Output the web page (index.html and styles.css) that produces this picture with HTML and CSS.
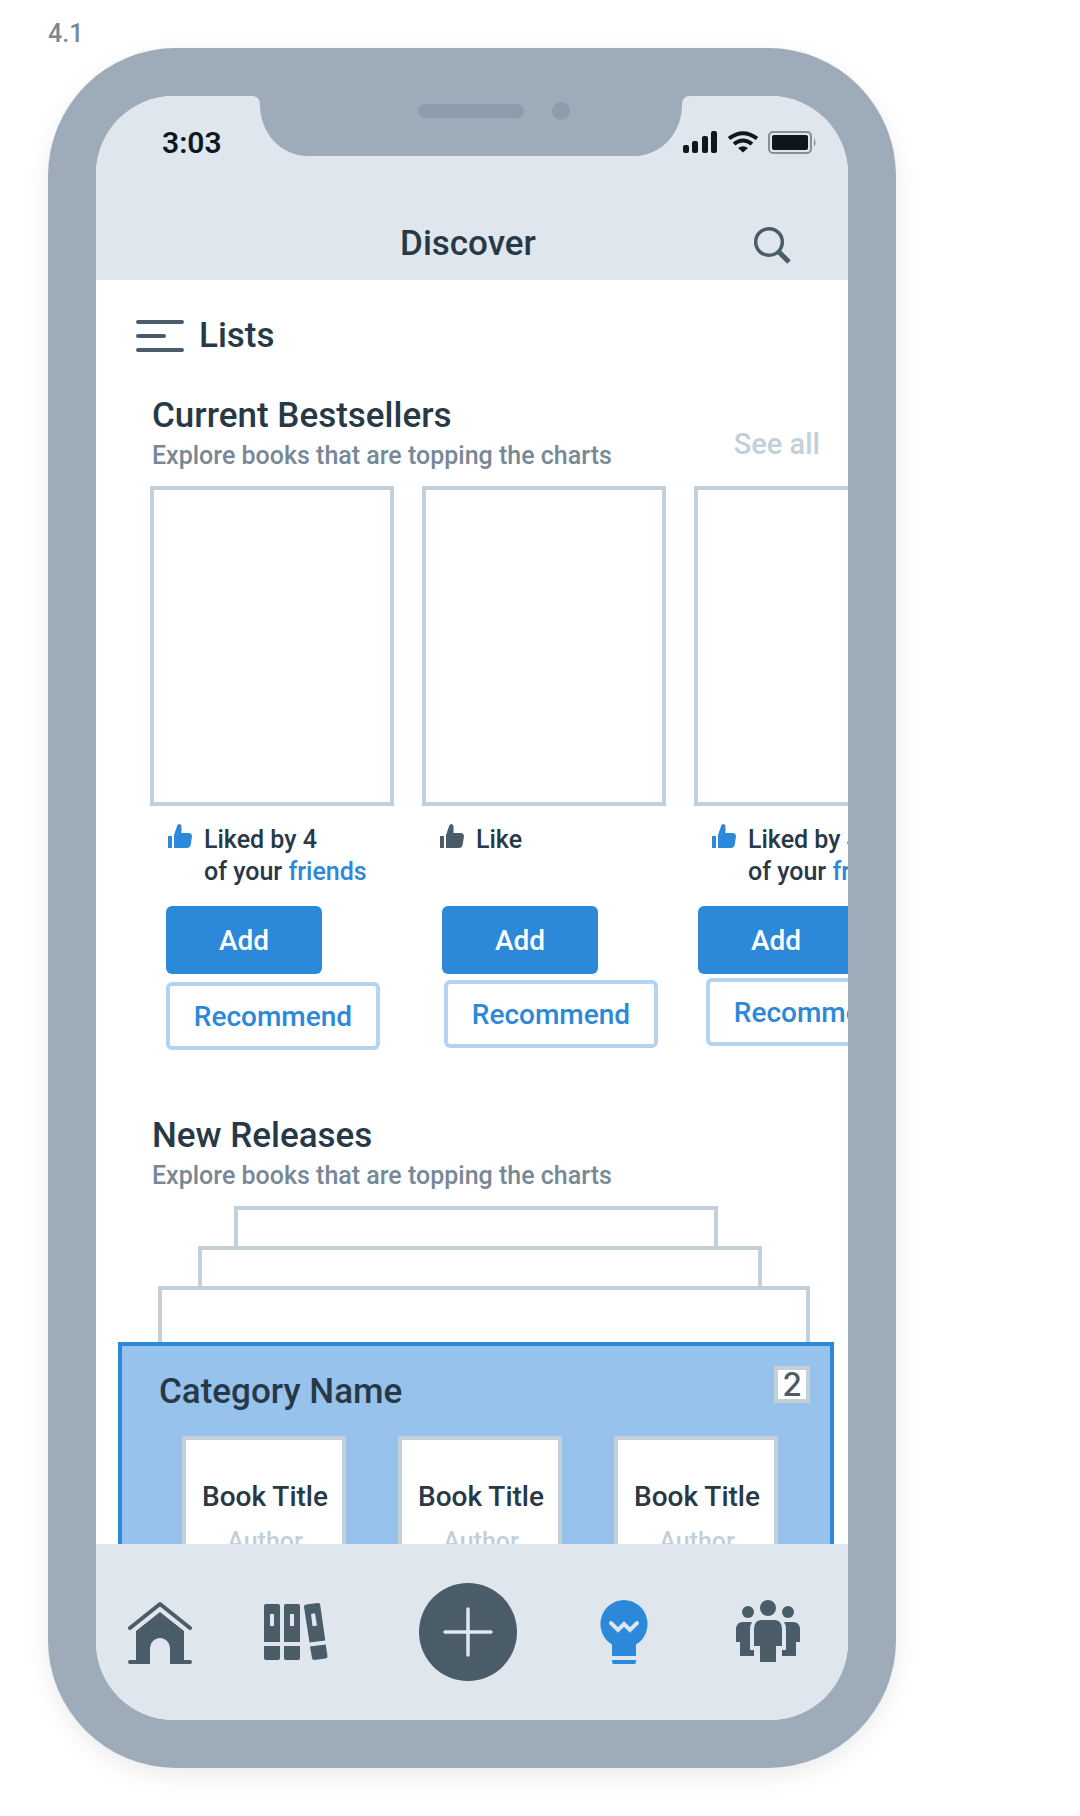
FILE: index.html
```html
<!DOCTYPE html>
<html lang="en">
<head>
  <meta charset="utf-8">
  <meta name="viewport" content="width=device-width, initial-scale=1">
  <title>Discover</title>
  <link rel="stylesheet" href="styles.css">
</head>
<body>
  <svg class="symbols" aria-hidden="true">
    <symbol id="thumb" viewBox="0 0 24 24">
      <path d="M0 12h4v12H0zM6 11 9.300 1.500Q9.800 0 11.300 0 13.500 0 13.500 2.500V9H20.500Q24 9 24 12.500L22.700 20.500Q22.200 24 18.500 24H6z"/>
    </symbol>
  </svg>

  <p class="frame-label">4.1</p>

  <div class="phone">
    <div class="screen">
      <svg class="notch" viewBox="0 0 438 60" aria-hidden="true">
        <path class="notch-body" d="M0 0Q8 0 8 9C8 36 28 60 56 60H382C410 60 430 36 430 9Q430 0 438 0z"/>
        <rect class="notch-part" x="166" y="8" width="106" height="14" rx="7"/>
        <circle class="notch-part" cx="309" cy="15" r="9"/>
      </svg>

      <header class="top">
        <div class="status">
          <span class="clock">3:03</span>
          <svg class="status-icons" viewBox="0 0 136 24" role="img" aria-label="Signal, wifi and battery">
            <rect x="0" y="14" width="6" height="8" rx="2"/>
            <rect x="9" y="10" width="6" height="12" rx="2"/>
            <rect x="19" y="5" width="6" height="17" rx="2"/>
            <rect x="28" y="0" width="6" height="22" rx="2"/>
            <g fill="none" stroke="#0f171e" stroke-width="4">
              <path d="M46 7.500Q60-3 74 7.500M51 13Q60 6 69 13"/>
            </g>
            <path d="M55 17Q60 13.500 65 17L60 21.500z"/>
            <rect x="86" y="1" width="42" height="21" rx="4" fill="none" stroke="#8b8d91" stroke-width="2"/>
            <rect x="89" y="4" width="36" height="15" rx="2"/>
            <path d="M131 7q3 4.500 0 9z" fill="#8b8d91"/>
          </svg>
        </div>
        <div class="title-row">
          <h1 class="title">Discover</h1>
          <button class="search" type="button" aria-label="Search">
            <svg viewBox="0 0 40 40" aria-hidden="true">
              <circle cx="17" cy="18" r="13.300" stroke-width="3.500"/>
              <path d="M27 28 37 38" stroke-width="5"/>
            </svg>
          </button>
        </div>
      </header>

      <main class="feed">
        <button class="lists" type="button">
          <svg class="lists-icon" viewBox="0 0 48 32" aria-hidden="true">
            <path d="M2 2H46M2 16H28M2 30H46"/>
          </svg>
          Lists
        </button>

        <section class="section">
          <div class="section-head">
            <div>
              <h2 class="heading">Current Bestsellers</h2>
              <p class="sub">Explore books that are topping the charts</p>
            </div>
            <a class="see-all" href="#all">See all</a>
          </div>
          <div class="rail">
            <article class="card card-first">
              <div class="cover"></div>
              <div class="likes">
                <svg class="thumb thumb-on" aria-hidden="true"><use href="#thumb"/></svg>
                <p>Liked by 4<br>of your <a href="#friends">friends</a></p>
              </div>
              <div class="actions">
                <button class="btn btn-add" type="button">Add</button>
                <button class="btn btn-recommend" type="button">Recommend</button>
              </div>
            </article>
            <article class="card card-second">
              <div class="cover"></div>
              <div class="likes">
                <svg class="thumb" aria-hidden="true"><use href="#thumb"/></svg>
                <p>Like</p>
              </div>
              <div class="actions">
                <button class="btn btn-add" type="button">Add</button>
                <button class="btn btn-recommend" type="button">Recommend</button>
              </div>
            </article>
            <article class="card card-third">
              <div class="cover"></div>
              <div class="likes">
                <svg class="thumb thumb-on" aria-hidden="true"><use href="#thumb"/></svg>
                <p>Liked by 4<br>of your <a href="#friends">friends</a></p>
              </div>
              <div class="actions">
                <button class="btn btn-add" type="button">Add</button>
                <button class="btn btn-recommend" type="button">Recommend</button>
              </div>
            </article>
          </div>
        </section>

        <section class="section section-new">
          <div class="section-head">
            <div>
              <h2 class="heading">New Releases</h2>
              <p class="sub">Explore books that are topping the charts</p>
            </div>
          </div>
          <div class="stack">
            <div class="sheet sheet-back"></div>
            <div class="sheet sheet-middle"></div>
            <div class="sheet sheet-front"></div>
            <div class="category">
              <div class="category-head">
                <h3 class="heading">Category Name</h3>
                <span class="badge">2</span>
              </div>
              <div class="books">
                <article class="book"><h4>Book Title</h4><p>Author</p></article>
                <article class="book"><h4>Book Title</h4><p>Author</p></article>
                <article class="book"><h4>Book Title</h4><p>Author</p></article>
              </div>
            </div>
          </div>
        </section>
      </main>

      <nav class="tabs" aria-label="Main">
        <a class="tab" href="#home" aria-label="Home">
          <svg viewBox="0 0 64 64" aria-hidden="true">
            <path d="M2 28 32 4 62 28" fill="none" stroke="currentColor" stroke-width="4" stroke-linecap="round" stroke-linejoin="round"/>
            <path d="M8 31 32 12 56 31V60H62a2 2 0 0 1 0 4H42V48a10 10 0 0 0-20 0V64H2a2 2 0 0 1 0-4H8z"/>
          </svg>
        </a>
        <a class="tab" href="#library" aria-label="Library">
          <svg viewBox="0 0 64 64" aria-hidden="true">
            <path fill-rule="evenodd" d="M2 4H14a2 2 0 0 1 2 2V42H0V6a2 2 0 0 1 2-2zM6 14V26H10V14zM0 46H16V58a2 2 0 0 1-2 2H2a2 2 0 0 1-2-2z"/>
            <path fill-rule="evenodd" d="M22 4H34a2 2 0 0 1 2 2V42H20V6a2 2 0 0 1 2-2zM26 14V26H30V14zM20 46H36V58a2 2 0 0 1-2 2H22a2 2 0 0 1-2-2z"/>
            <path fill-rule="evenodd" d="M42 4.500 54 3Q56 2.800 56.200 5L61.300 40.500 45.500 42.500 40 7Q40 4.800 42 4.500zM47 14 48.500 26.300 53 25.500 51 13.300zM46 46.500 61.700 44.500 63.500 56Q63.700 58 61.700 58.500L50.500 60Q48.300 60.200 48 58z"/>
          </svg>
        </a>
        <button class="tab tab-new" type="button" aria-label="New">
          <svg viewBox="0 0 98 98" aria-hidden="true">
            <path d="M49 26V72M26 49H72" fill="none" stroke="#dfe6ee" stroke-width="3.500" stroke-linecap="round"/>
          </svg>
        </button>
        <a class="tab tab-active" href="#discover" aria-label="Discover" aria-current="page">
          <svg viewBox="0 0 64 64" aria-hidden="true">
            <path d="M32 0a24 24 0 0 1 12 44.500V56H20V44.500A24 24 0 0 1 32 0zM20 60H44V62a2 2 0 0 1-2 2H22a2 2 0 0 1-2-2z"/>
            <path d="M19 23 26 30 32 24 38 30 45 23" fill="none" stroke="#dfe6ee" stroke-width="4" stroke-linecap="round"/>
          </svg>
        </a>
        <a class="tab" href="#friends" aria-label="Friends">
          <svg viewBox="0 0 64 64" aria-hidden="true">
            <circle cx="32" cy="8" r="8"/>
            <circle cx="12" cy="12" r="6"/>
            <circle cx="52" cy="12" r="6"/>
            <path d="M26 20H38Q46 20 46 29V46H40V62H24V46H18V29Q18 20 26 20z"/>
            <path d="M7 22H16Q14 25 14 30V50H18V56H4V42H0V30Q0 22 7 22zM57 22H48Q50 25 50 30V50H46V56H60V42H64V30Q64 22 57 22z"/>
          </svg>
        </a>
      </nav>
    </div>
  </div>
</body>
</html>
```
FILE: styles.css
```css
:root {
  --frame: #9dacb8;
  --frame-dark: #8d9cac;
  --bar: #dfe6ee;
  --ink: #273947;
  --icon: #4b5c69;
  --muted: #788896;
  --line: #c3cfd9;
  --blue: #2c88d9;
  --blue-line: #b2d4f1;
  --blue-fill: #96c2eb;
}

* {
  box-sizing: border-box;
}

body {
  margin: 0;
  padding: 0 48px 48px;
  background: #fff;
  color: var(--ink);
  font-family: Roboto, "Liberation Sans", sans-serif;
  font-size: 25px;
  font-weight: 500;
  line-height: 32px;
}

h1, h2, h3, h4, p {
  margin: 0;
  font: inherit;
}

button {
  padding: 0;
  border: 0;
  background: none;
  color: inherit;
  font: inherit;
}

a {
  color: var(--blue);
  text-decoration: none;
}

svg {
  display: block;
  fill: currentColor;
}

.symbols {
  width: 0;
  height: 0;
  position: absolute;
}

.frame-label {
  height: 48px;
  padding-top: 18px;
  color: var(--muted);
}

.phone {
  max-width: 848px;
  height: calc(100vh - 96px);
  padding: 48px;
  border-radius: 128px;
  background: var(--frame);
  box-shadow: 0 8px 24px rgba(0, 0, 0, 0.08);
}

.screen {
  position: relative;
  display: flex;
  flex-direction: column;
  height: 100%;
  overflow: hidden;
  border-radius: 78px;
  background: #fff;
}

.notch {
  position: absolute;
  top: 0;
  left: calc(50% - 220px);
  width: 438px;
}

.notch-body {
  fill: var(--frame);
}

.notch-part {
  fill: var(--frame-dark);
}

/* Top bar */
.top {
  background: var(--bar);
}

.status {
  display: flex;
  align-items: center;
  justify-content: space-between;
  height: 110px;
  padding: 0 29px 16px 66px;
  color: #0f171e;
}

.clock {
  font-size: 30px;
  font-weight: 600;
}

.status-icons {
  width: 136px;
}

.title-row {
  display: grid;
  grid-template-columns: 1fr auto 1fr;
  align-items: center;
  height: 74px;
  padding: 2px 56px 0 48px;
}

.title,
.lists,
.heading {
  font-size: 35px;
  line-height: 40px;
}

.title {
  grid-column: 2;
}

.search {
  justify-self: end;
  width: 40px;
  color: var(--icon);
}

.search svg {
  fill: none;
  stroke: currentColor;
}

/* Feed */
.feed {
  flex: 1;
  min-height: 0;
  overflow: hidden;
}

.lists {
  display: flex;
  align-items: center;
  gap: 15px;
  margin: 36px 0 40px 40px;
}

.lists-icon {
  width: 48px;
  fill: none;
  stroke: var(--icon);
  stroke-width: 4;
  stroke-linecap: round;
}

.section-head {
  display: flex;
  align-items: flex-end;
  justify-content: space-between;
  padding: 0 28px 0 56px;
  margin-bottom: 14px;
}

.section-new {
  margin-top: 66px;
}

.sub {
  margin-top: 4px;
  color: var(--muted);
}

.see-all {
  padding-bottom: 12px;
  color: var(--line);
  font-size: 29px;
}

.rail {
  display: flex;
  gap: 28px;
  padding-left: 54px;
}

.card {
  flex: 0 0 244px;
}

.cover {
  height: 320px;
  border: 4px solid var(--line);
}

.likes {
  display: flex;
  gap: 12px;
  min-height: 82px;
  padding: 18px 0 0 18px;
  white-space: nowrap;
}

.thumb {
  width: 24px;
  height: 24px;
  color: var(--icon);
}

.thumb-on {
  color: var(--blue);
}

.actions {
  display: flex;
  flex-direction: column;
  align-items: flex-start;
  padding-top: 18px;
}

.btn {
  height: 68px;
  padding-top: 2px;
  border-radius: 6px;
  font-size: 28px;
}

.btn-add {
  width: 156px;
  background: var(--blue);
  color: #fff;
}

.btn-recommend {
  width: 214px;
  border: 4px solid var(--blue-line);
  background: #fff;
  color: var(--blue);
}

.card-first .actions {
  gap: 8px;
  padding-left: 16px;
}

.card-second .actions {
  gap: 6px;
  padding-left: 20px;
}

.card-second .btn-recommend {
  margin-left: 2px;
}

.card-third .actions {
  gap: 4px;
  padding-left: 4px;
}

.card-third .btn-recommend {
  margin-left: 8px;
}

/* Stacked sheets */
.sheet {
  height: 40px;
  border: 4px solid var(--line);
  border-bottom: 0;
}

.sheet-back {
  margin: 0 130px 0 138px;
}

.sheet-middle {
  margin: 0 86px 0 102px;
}

.sheet-front {
  height: 56px;
  margin: 0 38px 0 62px;
}

.category {
  margin: 0 14px 0 22px;
  border: 4px solid var(--blue);
  background: var(--blue-fill);
}

.category-head {
  display: flex;
  align-items: flex-start;
  justify-content: space-between;
  height: 66px;
  padding: 20px 20px 0 37px;
}

.category-head .heading {
  margin-top: 6px;
}

.badge {
  width: 36px;
  height: 37px;
  border: 4px solid var(--line);
  background: #fff;
  color: var(--icon);
  font-family: Inter, sans-serif;
  font-size: 32px;
  line-height: 30px;
  text-align: center;
}

.books {
  display: flex;
  gap: 52px;
  padding: 24px 52px 40px 60px;
}

.book {
  flex: 0 0 164px;
  height: 200px;
  padding: 41px 0 0 2px;
  border: 4px solid var(--line);
  background: #fff;
  text-align: center;
}

.book h4 {
  font-size: 28px;
}

.book p {
  margin-top: 13px;
  color: var(--line);
}

/* Tab bar */
.tabs {
  display: grid;
  grid-template-columns: 14fr 20fr 23fr 16fr 20fr;
  align-items: center;
  justify-items: center;
  height: 176px;
  padding-left: 8px;
  background: var(--bar);
}

.tab {
  width: 64px;
  color: var(--icon);
}

.tab-active {
  color: var(--blue);
}

.tab-new {
  width: 98px;
  border-radius: 50%;
  background: var(--icon);
}
```
